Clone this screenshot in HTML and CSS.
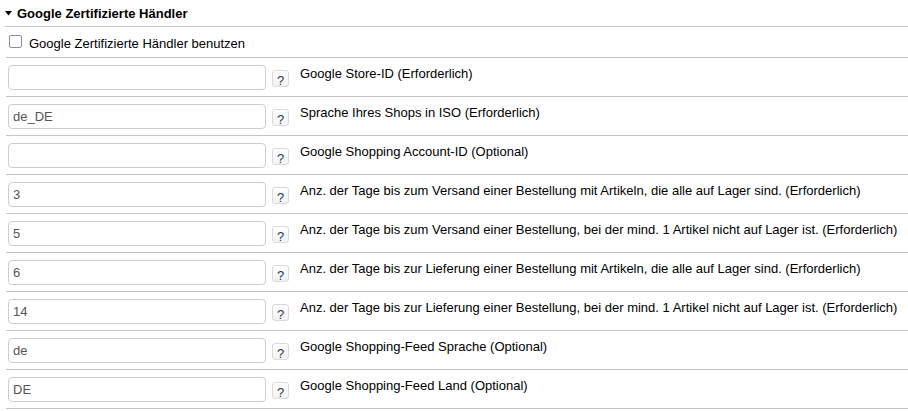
FILE: index.html
```html
<!DOCTYPE html>
<html lang="de">
<head>
<meta charset="utf-8">
<title>Google Zertifizierte Händler</title>
<link rel="stylesheet" href="styles.css">
</head>
<body>
<div class="panel">
  <div class="head">
    <svg class="caret" width="7" height="5" viewBox="0 0 7 5"><polygon points="0,0 7,0 3.5,4.5" fill="#000"/></svg>
    <span>Google Zertifizierte Händler</span>
  </div>
  <div class="row check-row">
    <span class="checkbox"></span>
    <label>Google Zertifizierte Händler benutzen</label>
  </div>
  <div class="row">
    <input class="field" type="text" value="">
    <span class="help">?</span>
    <span class="label">Google Store-ID (Erforderlich)</span>
  </div>
  <div class="row">
    <input class="field" type="text" value="de_DE">
    <span class="help">?</span>
    <span class="label">Sprache Ihres Shops in ISO (Erforderlich)</span>
  </div>
  <div class="row">
    <input class="field" type="text" value="">
    <span class="help">?</span>
    <span class="label">Google Shopping Account-ID (Optional)</span>
  </div>
  <div class="row">
    <input class="field" type="text" value="3">
    <span class="help">?</span>
    <span class="label">Anz. der Tage bis zum Versand einer Bestellung mit Artikeln, die alle auf Lager sind. (Erforderlich)</span>
  </div>
  <div class="row">
    <input class="field" type="text" value="5">
    <span class="help">?</span>
    <span class="label">Anz. der Tage bis zum Versand einer Bestellung, bei der mind. 1 Artikel nicht auf Lager ist. (Erforderlich)</span>
  </div>
  <div class="row">
    <input class="field" type="text" value="6">
    <span class="help">?</span>
    <span class="label">Anz. der Tage bis zur Lieferung einer Bestellung mit Artikeln, die alle auf Lager sind. (Erforderlich)</span>
  </div>
  <div class="row">
    <input class="field" type="text" value="14">
    <span class="help">?</span>
    <span class="label">Anz. der Tage bis zur Lieferung einer Bestellung, bei der mind. 1 Artikel nicht auf Lager ist. (Erforderlich)</span>
  </div>
  <div class="row">
    <input class="field" type="text" value="de">
    <span class="help">?</span>
    <span class="label">Google Shopping-Feed Sprache (Optional)</span>
  </div>
  <div class="row">
    <input class="field" type="text" value="DE">
    <span class="help">?</span>
    <span class="label">Google Shopping-Feed Land (Optional)</span>
  </div>
</div>
</body>
</html>
```

FILE: styles.css
```css
html, body {
  margin: 0;
  padding: 0;
  background: #fff;
}
body {
  font-family: "Liberation Sans", Arial, sans-serif;
  font-size: 13px;
  color: #000;
}
.panel {
  margin-left: 6px;
}
.head {
  height: 26px;
  display: flex;
  align-items: center;
  margin-left: -1px;
  font-weight: bold;
  font-size: 13px;
  border-bottom: 1px solid #c4c4c4;
}
.caret {
  margin-right: 5px;
  margin-top: 1px;
}
.row {
  display: flex;
  align-items: flex-start;
  height: 38px;
  padding-left: 2px;
  border-bottom: 1px solid #c4c4c4;
}
.check-row {
  height: 30px;
  align-items: center;
  padding-left: 3px;
}
.checkbox {
  width: 11px;
  height: 11px;
  border: 1px solid #8c8c9c;
  border-radius: 2px;
  background: #fff;
  margin-top: -2px;
}
.check-row label {
  margin-left: 7px;
  line-height: 15px;
  margin-top: 2px;
}
.field {
  box-sizing: border-box;
  width: 258px;
  height: 25px;
  margin: 7px 0 0 0;
  padding: 0 4px;
  border: 1px solid #cdcdcd;
  border-radius: 4px;
  font-family: "Liberation Sans", Arial, sans-serif;
  font-size: 13px;
  color: #555;
  background: #fff;
  outline: none;
}
.help {
  box-sizing: border-box;
  width: 17px;
  height: 17px;
  margin: 12px 0 0 6px;
  border: 1px solid #dadada;
  border-radius: 3px;
  background: linear-gradient(#ffffff, #f3f3f3);
  display: flex;
  align-items: center;
  justify-content: center;
  font-family: "Liberation Sans", Arial, sans-serif;
  font-size: 13px;
  font-weight: normal;
  color: #2c3850;
  line-height: 1;
  padding-top: 3px;
}
.label {
  margin-left: 11px;
  padding-top: 8px;
  line-height: 15px;
  white-space: nowrap;
}
```
